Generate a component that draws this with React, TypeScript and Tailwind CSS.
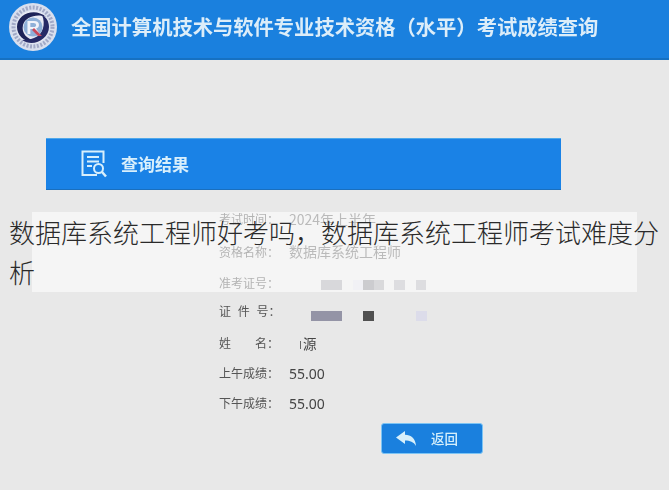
const cjk = { fontFamily: '"Noto Sans CJK SC", "Noto Sans", sans-serif' }

const Logo = () => (
  <svg viewBox="0 0 48 48" className="w-[48px] h-[48px] shrink-0 blur-[0.5px]">
    <circle cx="24" cy="24" r="24" fill="#d9dfee" />
    <circle cx="24" cy="24" r="19.500" fill="none" stroke="#7d86ad" strokeWidth="4" strokeDasharray="2 1.5" opacity="0.6" />
    <circle cx="24" cy="24" r="16.500" fill="#e8eaf4" />
    <path d="M37 14 C26 4 8 11 8 24 C8 34 18 41 28 38 C18 37 12 30 14 22 C16 14 28 10 37 14 Z" fill="#1e2358" />
    <path d="M13 37 C24 45 40 36 40 24 C40 18 37 14 33 12 C37 21 34 32 25 35 C21 36.500 17 36.500 13 37 Z" fill="#262a66" />
    <circle cx="24" cy="24" r="9.500" fill="#8fb0d8" />
    <text x="24" y="31" textAnchor="middle" fontSize="19" fontWeight="700" fill="#f1f3fa" fontFamily="Liberation Sans, sans-serif">R</text>
    <path d="M25 25 L33 33 L29 33 L23 27 Z" fill="#c8485a" />
  </svg>
)

const SearchDoc = () => (
  <svg viewBox="0 0 26 29" fill="none" stroke="#d8effc" strokeWidth="2" className="w-[26px] h-[29px] blur-[0.3px]">
    <path d="M16 25 H1.500 V1.500 H22.500 V13" />
    <path d="M6 7 H18 M6 11.500 H18 M6 16 H11" />
    <circle cx="17.500" cy="18.500" r="4.500" />
    <path d="M21 22 L25 26.500" strokeWidth="2.500" />
  </svg>
)

const BackArrow = () => (
  <svg viewBox="0 0 20 15" className="w-[20px] h-[15px] blur-[0.3px]">
    <path d="M0 6.500 L9 0 V3.800 C15 3.800 19.500 7.500 20 15 C17.500 10.800 14 9.500 9 9.500 V13 Z" fill="#d6effb" />
  </svg>
)

const Row = ({ label, className, labelClass, children }: { label: string; className: string; labelClass?: string; children?: React.ReactNode }) => (
  <div className={`flex items-center ${className}`}>
    <span className={`w-[70px] text-[12px] text-[#555] ${labelClass ?? ''}`}>{label}</span>
    {children}
  </div>
)

const App = () => {
  return (
    <div className="relative w-[669px] h-[490px] overflow-hidden bg-[#e8e8e8]" style={cjk}>
      <header className="h-[60px] bg-[#1a80de] border-b-2 border-[#1671c2] flex items-center pl-[9px] pb-[5px]">
        <Logo />
        <h1 className="ml-[14px] text-[20.300px] leading-none font-bold text-[#dcedf9] whitespace-nowrap blur-[0.4px]">
          全国计算机技术与软件专业技术资格（水平）考试成绩查询
        </h1>
      </header>

      <main className="pt-[78px] pl-[46px]">
        <div className="w-[515px] h-[52px] bg-[#1a82e6] border-t border-[#4fa8ea] border-b border-b-[#1a6fbe] flex items-center pl-[35px]">
          <SearchDoc />
          <span className="ml-[14px] text-[17px] font-bold text-[#d8effc] blur-[0.3px]">查询结果</span>
        </div>

        <div className="pl-[173px] pt-[13px] blur-[0.3px]">
          <Row label="考试时间：" className="h-[32px]">
            <span className="text-[14px] text-[#666]">2024年上半年</span>
          </Row>
          <Row label="资格名称：" className="h-[33px]">
            <span className="text-[14px] text-[#666]">数据库系统工程师</span>
          </Row>
          <Row label="准考证号：" className="h-[32px]" labelClass="mb-[2px]">
            <div className="flex h-[10px] ml-[32px] mt-[1px]">
              <i className="w-[21px] bg-[#a8a8ae]" />
              <i className="w-[10px] ml-[11px] bg-[#e0e0e8]" />
              <i className="w-[11px] bg-[#8e8e94]" />
              <i className="w-[10px] bg-[#aaaab0]" />
              <i className="w-[11px] ml-[10px] bg-[#b4b4ba]" />
              <i className="w-[10px] ml-[11px] bg-[#b4b4ba]" />
            </div>
          </Row>
          <Row label="证 件 号：" className="h-[31px]" labelClass="mb-[9px] [word-spacing:4px]">
            <div className="flex h-[10px] ml-[22px]">
              <i className="w-[31px] bg-[#9494a6]" />
              <i className="w-[11px] ml-[21px] bg-[#505050]" />
              <i className="w-[11px] ml-[42px] bg-[#dcdcea]" />
            </div>
          </Row>
          <Row label="姓　　名：" className="h-[24px]">
            <span className="ml-[11px] mt-[3px] w-px h-[8px] bg-[#666]" />
            <span className="ml-[2px] text-[13.500px] text-[#444]">源</span>
          </Row>
          <Row label="上午成绩：" className="h-[30px] mt-[3px]">
            <span className="text-[14px] text-[#444]" style={{ fontFamily: '"Noto Sans", sans-serif' }}>55.00</span>
          </Row>
          <Row label="下午成绩：" className="h-[30px]">
            <span className="text-[14px] text-[#444]" style={{ fontFamily: '"Noto Sans", sans-serif' }}>55.00</span>
          </Row>
          <div className="pl-[162px] pt-[5px]">
            <button className="w-[102px] h-[31px] rounded-[3px] bg-[#1a80de] border border-[#7cc4f4] flex items-center pl-[14px] text-[#d6effb]">
              <BackArrow />
              <span className="ml-[15px] text-[13.500px] font-medium">返回</span>
            </button>
          </div>
        </div>
      </main>

      <div className="absolute left-[32px] top-[212px] w-[605px] h-[80px] bg-white/55" />
      <h2 className="absolute left-[9px] top-[212px] w-[651px] text-[26px] leading-[40px] font-light text-[#2a2a2a]">
        数据库系统工程师好考吗，数据库系统工程师考试难度分析
      </h2>
    </div>
  )
}

export default App
